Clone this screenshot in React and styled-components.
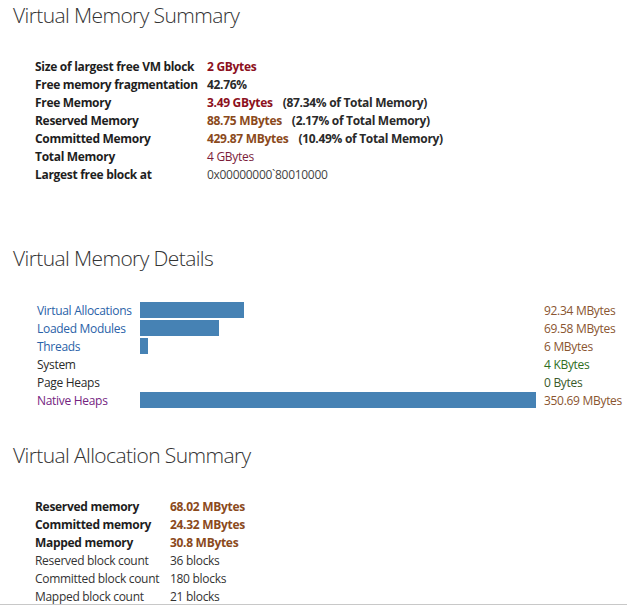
import React from "react";
import styled, { createGlobalStyle } from "styled-components";

const GlobalStyle = createGlobalStyle`
  html, body {
    margin: 0;
    padding: 0;
    background: #fff;
  }
  body {
    font-family: "Open Sans", "Noto Sans", "Liberation Sans", sans-serif;
    color: #222;
  }
`;

const summaryRows = [
  { label: "Size of largest free VM block", value: "2 GBytes", tone: "red", bold: true },
  { label: "Free memory fragmentation", value: "42.76%", tone: "dark", bold: true },
  { label: "Free Memory", value: "3.49 GBytes", note: "(87.34% of Total Memory)", tone: "red", bold: true },
  { label: "Reserved Memory", value: "88.75 MBytes", note: "(2.17% of Total Memory)", tone: "brown", bold: true },
  { label: "Committed Memory", value: "429.87 MBytes", note: "(10.49% of Total Memory)", tone: "brown", bold: true },
  { label: "Total Memory", value: "4 GBytes", tone: "plum" },
  { label: "Largest free block at", value: "0x00000000`80010000", tone: "gray" },
];

const details = [
  { label: "Virtual Allocations", kind: "link", amount: 92.34, value: "92.34 MBytes", tone: "brown" },
  { label: "Loaded Modules", kind: "link", amount: 69.58, value: "69.58 MBytes", tone: "brown" },
  { label: "Threads", kind: "link", amount: 6, value: "6 MBytes", tone: "brown" },
  { label: "System", kind: "plain", amount: 0, value: "4 KBytes", tone: "green" },
  { label: "Page Heaps", kind: "plain", amount: 0, value: "0 Bytes", tone: "olive" },
  { label: "Native Heaps", kind: "visited", amount: 350.69, value: "350.69 MBytes", tone: "brown" },
];

const allocRows = [
  { label: "Reserved memory", value: "68.02 MBytes", bold: true },
  { label: "Committed memory", value: "24.32 MBytes", bold: true },
  { label: "Mapped memory", value: "30.8 MBytes", bold: true },
  { label: "Reserved block count", value: "36 blocks" },
  { label: "Committed block count", value: "180 blocks" },
  { label: "Mapped block count", value: "21 blocks" },
];

const tones = {
  red: "#8c1020",
  dark: "#2a2a2a",
  brown: "#8b4a1c",
  detail: "#8a5530",
  plum: "#7b1c3a",
  gray: "#444",
  green: "#2f6f1f",
  olive: "#3a5a2a",
  text: "#333",
};

const linkColors = {
  link: "#2a62a8",
  visited: "#74237f",
  plain: "#2a2a2a",
};

const BAR_MAX = 396;
const maxAmount = Math.max(...details.map((d) => d.amount));

export default function App() {
  return (
    <Page>
      <GlobalStyle />
      <Title>Virtual Memory Summary</Title>
      <KeyTable $valueCol="172px">
        {summaryRows.map((r) => (
          <React.Fragment key={r.label}>
            <Label $bold>{r.label}</Label>
            <Value $bold={r.bold} $tone={tones[r.tone]}>
              {r.value}
              {r.note && <Note>{r.note}</Note>}
            </Value>
          </React.Fragment>
        ))}
      </KeyTable>

      <Title $gap="60px">Virtual Memory Details</Title>
      <DetailTable>
        {details.map((d) => (
          <React.Fragment key={d.label}>
            <DetailLabel $color={linkColors[d.kind]}>{d.label}</DetailLabel>
            <BarTrack>
              {d.amount > 0 && (
                <Bar style={{ width: Math.max(8, Math.round((d.amount / maxAmount) * BAR_MAX)) }} />
              )}
            </BarTrack>
            <Value $tone={d.tone === "brown" ? tones.detail : tones[d.tone]}>{d.value}</Value>
          </React.Fragment>
        ))}
      </DetailTable>

      <Title $gap="31px">Virtual Allocation Summary</Title>
      <KeyTable $valueCol="135px">
        {allocRows.map((r) => (
          <React.Fragment key={r.label}>
            <Label $bold={r.bold}>{r.label}</Label>
            <Value $bold={r.bold} $tone={r.bold ? tones.brown : tones.text}>
              {r.value}
            </Value>
          </React.Fragment>
        ))}
      </KeyTable>
    </Page>
  );
}

const Page = styled.div`
  height: 604px;
  border-bottom: 1px solid #c8c8c8;
  overflow: hidden;
  padding-left: 13px;
  display: flex;
  flex-direction: column;
`;

const Title = styled.h2`
  margin: ${(p) => p.$gap || "0"} 0 0 0;
  font-size: 21px;
  font-weight: 300;
  line-height: 30px;
  letter-spacing: -0.6px;
  color: #333;
`;

const KeyTable = styled.div`
  margin: 27px 0 0 22px;
  display: grid;
  grid-template-columns: ${(p) => p.$valueCol} auto;
  grid-auto-rows: 18px;
  align-items: center;
  font-size: 12px;
  letter-spacing: -0.3px;
`;

const Label = styled.div`
  font-weight: ${(p) => (p.$bold ? 700 : 400)};
  color: ${(p) => (p.$bold ? "#1e1e1e" : "#333")};
  white-space: nowrap;
`;

const Value = styled.div`
  font-weight: ${(p) => (p.$bold ? 700 : 400)};
  color: ${(p) => p.$tone};
  white-space: nowrap;
  font-size: 12px;
`;

const Note = styled.span`
  margin-left: 10px;
  color: #2a2a2a;
`;

const DetailTable = styled.div`
  margin: 28px 0 0 24px;
  display: grid;
  grid-template-columns: 103px 404px auto;
  grid-auto-rows: 18px;
  align-items: center;
  font-size: 12px;
  letter-spacing: -0.3px;
`;

const DetailLabel = styled.div`
  color: ${(p) => p.$color};
  white-space: nowrap;
`;

const BarTrack = styled.div`
  height: 16px;
  display: flex;
`;

const Bar = styled.div`
  height: 100%;
  background: #4682b4;
`;
